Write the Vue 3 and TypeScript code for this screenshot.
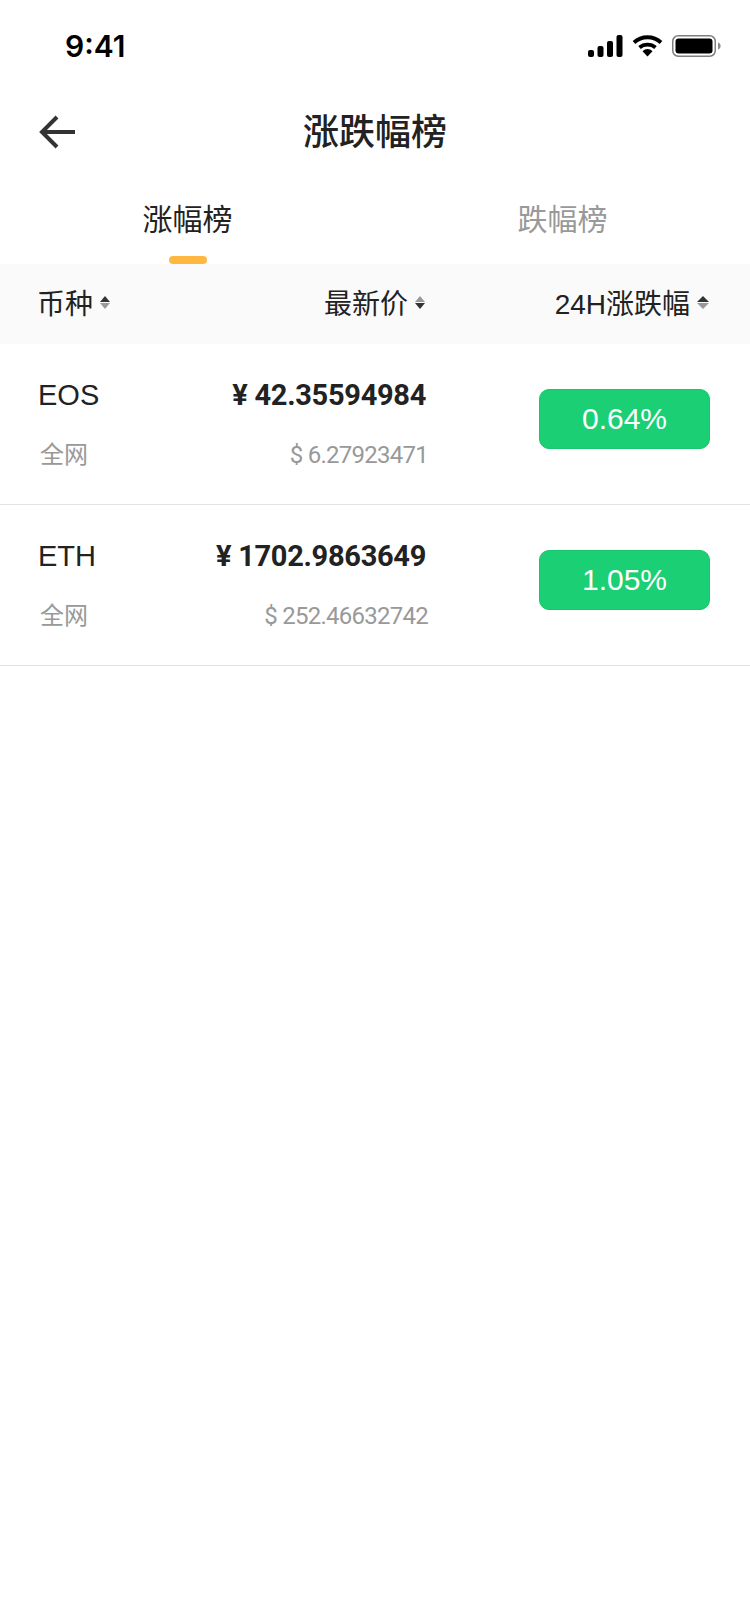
<script setup lang="ts">
interface Coin {
  name: string
  market: string
  cny: string
  usd: string
  change: string
}

const coins: Coin[] = [
  { name: 'EOS', market: '全网', cny: '42.35594984', usd: '6.27923471', change: '0.64%' },
  { name: 'ETH', market: '全网', cny: '1702.9863649', usd: '252.46632742', change: '1.05%' },
]
</script>

<template>
  <div class="page">
    <div class="status-bar">
      <span class="time">9:41</span>
      <div class="status-icons">
        <svg width="35" height="22" viewBox="0 0 35 22">
          <rect x="0" y="15" width="6" height="7" rx="2" fill="#000" />
          <rect x="9.5" y="11" width="6" height="11" rx="2" fill="#000" />
          <rect x="19" y="6" width="6" height="16" rx="2" fill="#000" />
          <rect x="28.5" y="0" width="6" height="22" rx="2" fill="#000" />
        </svg>
        <svg width="31" height="22" viewBox="0 0 31 22">
          <path d="M2 7.5C9.5 .5 21.5 .5 29 7.5" fill="none" stroke="#000" stroke-width="3.8" />
          <path d="M7.5 12.5C12 8.6 19 8.6 23.5 12.5" fill="none" stroke="#000" stroke-width="3.8" />
          <path d="M10.5 16.2C13.5 13.4 17.5 13.4 20.5 16.2L15.5 21.5Z" fill="#000" />
        </svg>
        <svg width="49" height="22" viewBox="0 0 49 22">
          <rect x="0.75" y="0.75" width="42.5" height="20.5" rx="5.5" fill="none" stroke="#7f7f7f" stroke-width="1.5" />
          <rect x="3.5" y="3.5" width="37" height="15" rx="3" fill="#000" />
          <path d="M46 7.5C47.6 8 48.6 9.4 48.6 11S47.6 14 46 14.5Z" fill="#8a8a8a" />
        </svg>
      </div>
    </div>

    <div class="nav">
      <svg class="back" width="36" height="34" viewBox="0 0 36 34">
        <path d="M18 2 3 17l15 15M3 17h33" fill="none" stroke="#333" stroke-width="4" />
      </svg>
      <h1 class="title">涨跌幅榜</h1>
    </div>

    <div class="tabs">
      <div class="tab active">涨幅榜</div>
      <div class="tab">跌幅榜</div>
    </div>

    <div class="table-head">
      <div class="head-cell">
        币种
        <span class="sort"><i class="up dark"></i><i class="down"></i></span>
      </div>
      <div class="head-cell right">
        最新价
        <span class="sort"><i class="up"></i><i class="down dark"></i></span>
      </div>
      <div class="head-cell right">
        24H涨跌幅
        <span class="sort big"><i class="up dark"></i><i class="down"></i></span>
      </div>
    </div>

    <div v-for="coin in coins" :key="coin.name" class="row">
      <div class="coin">
        <div class="coin-name">{{ coin.name }}</div>
        <div class="coin-market">{{ coin.market }}</div>
      </div>
      <div class="price">
        <div class="cny">¥ {{ coin.cny }}</div>
        <div class="usd">$ {{ coin.usd }}</div>
      </div>
      <div class="badge">{{ coin.change }}</div>
    </div>
  </div>
</template>

<style scoped>
.page {
  width: 750px;
  min-height: 1624px;
  background: #fff;
  color: #222;
  font-family: "Liberation Sans", "Noto Sans CJK SC", sans-serif;
}

.status-bar {
  height: 88px;
  display: flex;
  align-items: flex-start;
  justify-content: space-between;
  padding: 35px 29px 0 65px;
  box-sizing: border-box;
}

.time {
  font-family: Inter, "Liberation Sans", sans-serif;
  font-size: 30px;
  font-weight: 600;
  line-height: 22px;
  color: #000;
}

.status-icons {
  display: flex;
  gap: 9px;
}

.status-icons svg {
  display: block;
}

.nav {
  position: relative;
  height: 88px;
  display: flex;
  align-items: center;
  justify-content: center;
}

.back {
  position: absolute;
  left: 39px;
  top: 27px;
}

.title {
  margin: 0;
  padding-top: 2px;
  font-size: 36px;
  font-weight: 500;
  line-height: 86px;
  color: #222;
}

.tabs {
  height: 88px;
  display: flex;
}

.tab {
  position: relative;
  flex: 1;
  text-align: center;
  font-size: 30px;
  line-height: 88px;
  color: #999;
}

.tab.active {
  color: #222;
}

.tab.active::after {
  content: "";
  position: absolute;
  left: 50%;
  bottom: 0;
  width: 38px;
  height: 8px;
  margin-left: -19px;
  border-radius: 4px;
  background: #ffb83f;
}

.table-head {
  height: 80px;
  display: grid;
  grid-template-columns: 150px 238px 1fr;
  align-items: center;
  padding: 0 41px 4px 37px;
  background: #fafafa;
  box-sizing: border-box;
  font-size: 28px;
  color: #222;
}

.head-cell {
  display: flex;
  align-items: center;
  gap: 7px;
}

.head-cell.right {
  justify-content: flex-end;
}

.sort {
  display: flex;
  flex-direction: column;
  gap: 1px;
}

.sort i {
  display: block;
  width: 0;
  height: 0;
  border-left: 5px solid transparent;
  border-right: 5px solid transparent;
}

.sort .up {
  border-bottom: 6px solid #999;
}

.sort .down {
  border-top: 6px solid #999;
}

.sort .up.dark {
  border-bottom-color: #333;
}

.sort .down.dark {
  border-top-color: #333;
}

.sort.big i {
  border-left-width: 6px;
  border-right-width: 6px;
}

.row {
  height: 161px;
  display: grid;
  grid-template-columns: 150px 238px 1fr;
  align-items: center;
  padding: 0 40px 0 38px;
  border-bottom: 1px solid #e2e2e2;
  box-sizing: border-box;
}

.coin-name {
  margin-top: 2px;
  font-size: 29px;
  line-height: 34px;
  color: #222;
}

.coin-market {
  margin-top: 26px;
  margin-left: 2px;
  font-size: 24px;
  line-height: 34px;
  color: #999;
}

.price {
  text-align: right;
  font-family: Roboto, "Liberation Sans", sans-serif;
}

.cny {
  margin-top: 2px;
  font-size: 29px;
  font-weight: 700;
  letter-spacing: -0.3px;
  line-height: 34px;
  color: #222;
}

.usd {
  margin-top: 26px;
  margin-right: -2px;
  font-size: 24px;
  font-weight: 400;
  letter-spacing: -0.75px;
  line-height: 34px;
  color: #999;
}

.badge {
  justify-self: end;
  width: 171px;
  height: 60px;
  margin-bottom: 10px;
  border: 1px solid #17c66d;
  border-radius: 10px;
  box-sizing: border-box;
  background: #1bcf74;
  color: #fff;
  font-size: 30px;
  line-height: 58px;
  text-align: center;
}
</style>
